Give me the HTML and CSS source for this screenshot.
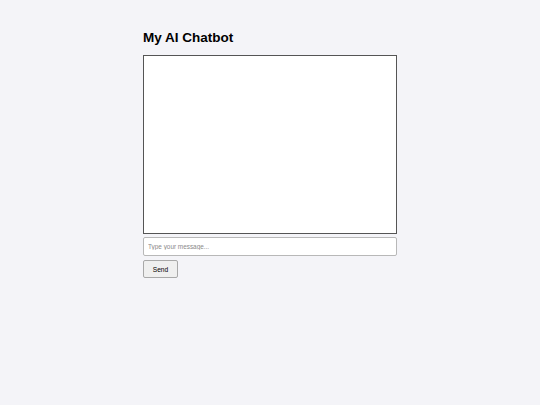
FILE: index.html
```html
<!DOCTYPE html>
<html>
<head>
<meta charset="utf-8">
<link rel="stylesheet" href="styles.css">
</head>
<body>
<div class="container">
  <h1 class="title">My AI Chatbot</h1>
  <div class="chat-box"></div>
  <input class="msg-input" type="text" placeholder="Type your message...">
  <div><button class="send-btn">Send</button></div>
</div>
</body>
</html>
```
FILE: styles.css
```css
html, body {
  margin: 0;
  padding: 0;
  background: #f4f4f8;
  font-family: "Liberation Sans", Arial, sans-serif;
}
.container {
  width: 254px;
  margin: 0 auto;
  padding-top: 30px;
  display: flex;
  flex-direction: column;
}
.title {
  margin: 0 0 9px 0;
  font-size: 13.5px;
  font-weight: bold;
  line-height: 16px;
  color: #000;
}
.chat-box {
  box-sizing: border-box;
  height: 179px;
  background: #fff;
  border: 1px solid #555;
}
.msg-input {
  box-sizing: border-box;
  margin: 3px 0 0 0;
  height: 19px;
  width: 254px;
  border: 1px solid #b8b8b8;
  border-radius: 2px;
  background: #fff;
  padding: 0 4px;
  font-family: "Liberation Sans", Arial, sans-serif;
  font-size: 6.4px;
  outline: none;
}
.msg-input::placeholder {
  color: #8a8a8a;
}
.send-btn {
  box-sizing: border-box;
  margin-top: 4px;
  width: 35px;
  height: 18px;
  padding: 0;
  background: #efefef;
  border: 1px solid #a8a8a8;
  border-radius: 2px;
  font-family: "Liberation Sans", Arial, sans-serif;
  font-size: 6.6px;
  color: #000;
}
```
